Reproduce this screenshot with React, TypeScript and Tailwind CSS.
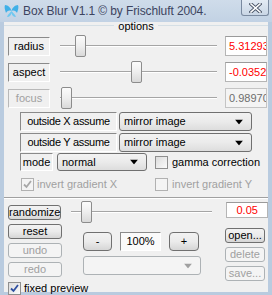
import React from "react";

const sunken =
  "border-t border-l border-t-[#8a8a8a] border-l-[#8a8a8a] border-r border-b border-r-white border-b-white";

function Thumb({ cls }: { cls: string }) {
  return (
    <div
      className={
        "absolute top-0 h-[22px] w-[11px] rounded-[2px] border border-[#8c8c8c] bg-gradient-to-b from-[#fbfbfb] via-[#eeeeee] to-[#d9d9d9] " +
        cls
      }
    />
  );
}

function Track({ cls, children }: { cls: string; children: React.ReactNode }) {
  return (
    <div className={"relative h-[22px] shrink-0 " + cls}>
      <div className="absolute left-0 right-0 top-[10px] h-[2px] border-t border-t-[#a5a5a5] border-b border-b-white" />
      {children}
    </div>
  );
}

function Select({ cls, text, disabled }: { cls: string; text: string; disabled?: boolean }) {
  return (
    <div
      className={
        "relative flex items-center rounded-[3px] border pl-[4px] " +
        (disabled
          ? "border-[#adb2b5] bg-[#f4f4f4] "
          : "border-[#707070] bg-gradient-to-b from-[#f2f2f2] via-[#ebebeb] to-[#dddddd] ") +
        cls
      }
    >
      <span className="text-[11px] leading-none">{text}</span>
      <svg className="absolute right-[8px] top-1/2 -translate-y-1/2" width="8" height="5" viewBox="0 0 8 5">
        <path d="M0 0H8L4 5Z" fill={disabled ? "#a0a0a0" : "#000"} />
      </svg>
    </div>
  );
}

function Btn({ cls, text, disabled }: { cls: string; text: string; disabled?: boolean }) {
  return (
    <div
      className={
        "flex items-center justify-center rounded-[3px] border text-[11px] leading-none " +
        (disabled
          ? "border-[#adb2b5] bg-[#f4f4f4] text-[#a0a0a0] "
          : "border-[#707070] bg-gradient-to-b from-[#f2f2f2] via-[#ebebeb] to-[#d6d6d6] text-black ") +
        cls
      }
    >
      {text}
    </div>
  );
}

function Check({ checked, disabled }: { checked?: boolean; disabled?: boolean }) {
  return (
    <div
      className={
        "relative flex h-[13px] w-[13px] shrink-0 items-center justify-center border " +
        (disabled ? "border-[#b1b1b1] bg-[#f4f4f4]" : "border-[#8f8f8f] bg-gradient-to-br from-[#dcdcdc] to-[#fbfbfb]")
      }
    >
      {checked && (
        <svg width="9" height="9" viewBox="0 0 9 9">
          <path
            d="M1 4.5L3.5 7L8 1"
            fill="none"
            stroke={disabled ? "#a8a8a8" : "#2f4fa0"}
            strokeWidth="1.8"
          />
        </svg>
      )}
    </div>
  );
}

const valueBox =
  "ml-[8px] flex h-[20px] w-[42px] items-center overflow-hidden whitespace-nowrap border pl-[3px] text-[11px] ";

export default function App() {
  return (
    <div className="h-[295px] w-[272px] overflow-hidden bg-[#b9cbdf] font-['Liberation_Sans',Arial,sans-serif] text-black">
      {/* title bar */}
      <div className="relative flex h-[22px] items-center bg-gradient-to-b from-[#cfdcea] to-[#c2d2e4] pl-[4px]">
        <svg width="15" height="14" viewBox="0 0 15 14" className="mb-[1px]">
          <path d="M1 1C4 1 7 4 7.5 7C5 6 3 7 2 9C1 6 0 3 1 1Z" fill="#3fb0e8" />
          <path d="M14 1C11 1 8 4 7.5 7C10 6 12 7 13 9C14 6 15 3 14 1Z" fill="#3fb0e8" />
          <path d="M7.5 7C6 9 4 10 3 13C6 13 7 11 7.5 9C8 11 9 13 12 13C11 10 9 9 7.5 7Z" fill="#6fc8f0" />
        </svg>
        <span className="ml-[4px] mb-[1px] text-[12px] leading-none tracking-[-0.1px] text-[#3d4460]">
          Box Blur V1.1 © by Frischluft 2004.
        </span>
        <div className="absolute right-[3px] top-0 flex h-[16px] w-[28px] items-center justify-center rounded-b-[3px] border border-t-0 border-[#7a8aa0] bg-gradient-to-b from-[#e3ebf4] to-[#c9d6e5]">
          <svg width="13" height="10" viewBox="0 0 13 10">
            <path d="M2 1L11 9M11 1L2 9" stroke="#4a5568" strokeWidth="3.4" strokeLinecap="square" />
            <path d="M2 1L11 9M11 1L2 9" stroke="#ffffff" strokeWidth="1.6" strokeLinecap="square" />
          </svg>
        </div>
      </div>

      {/* client area */}
      <div className="mx-[4px] h-[270px] bg-[#f0f0f0]">
        {/* options group header */}
        <div className="flex h-[8px] items-start">
          <div className="mt-[3px] h-px flex-1 bg-[#d5dfe5]" />
          <span className="-mt-[1px] px-[4px] text-[11px] leading-[11px]">options</span>
          <div className="mt-[3px] h-px flex-1 bg-[#d5dfe5]" />
        </div>

        {/* radius */}
        <div className="mt-[5px] flex h-[22px] items-center pl-[4px]">
          <div className={"flex h-[19px] w-[42px] items-center justify-center text-[11px] " + sunken}>radius</div>
          <Track cls="ml-[10px] w-[157px]">
            <Thumb cls="left-[15px]" />
          </Track>
          <div className={valueBox + "border-[#b5b5b5] border-t-[#9a9a9a] bg-white text-[#ff0000]"}>5.31293</div>
        </div>

        {/* aspect */}
        <div className="mt-[4px] flex h-[22px] items-center pl-[4px]">
          <div className={"flex h-[19px] w-[42px] items-center justify-center text-[11px] " + sunken}>aspect</div>
          <Track cls="ml-[10px] w-[157px]">
            <Thumb cls="left-[71px]" />
          </Track>
          <div className={valueBox + "border-[#b5b5b5] border-t-[#9a9a9a] bg-white text-[#ff0000]"}>-0.0352</div>
        </div>

        {/* focus (disabled) */}
        <div className="mt-[4px] flex h-[22px] items-center pl-[4px]">
          <div className="flex h-[19px] w-[42px] items-center justify-center border-t border-l border-[#b8b8b8] border-r border-b border-r-white border-b-white text-[11px] text-[#a0a0a0]">
            focus
          </div>
          <Track cls="ml-[10px] w-[157px]">
            <Thumb cls="left-[1px]" />
          </Track>
          <div className={valueBox + "border-[#c4c4c4] bg-[#f4f4f4] text-[#6d6d6d]"}>0.98970</div>
        </div>

        {/* outside X */}
        <div className="mt-[3px] flex h-[19px] items-stretch pl-[16px]">
          <div className={"flex w-[97px] items-center justify-center text-[11px] tracking-[-0.3px] " + sunken}>
            outside X assume
          </div>
          <Select cls="ml-[2px] w-[133px]" text="mirror image" />
        </div>
        {/* outside Y */}
        <div className="mt-[2px] flex h-[19px] items-stretch pl-[16px]">
          <div className={"flex w-[97px] items-center justify-center text-[11px] tracking-[-0.3px] " + sunken}>
            outside Y assume
          </div>
          <Select cls="ml-[2px] w-[133px]" text="mirror image" />
        </div>
        {/* mode */}
        <div className="mt-[1px] flex h-[18px] items-stretch pl-[16px]">
          <div className={"flex w-[33px] items-center justify-center text-[11px] " + sunken}>mode</div>
          <Select cls="ml-[4px] w-[90px]" text="normal" />
          <div className="ml-[8px] flex items-center">
            <Check />
            <span className="ml-[4px] text-[11px]">gamma correction</span>
          </div>
        </div>
        {/* invert row */}
        <div className="mt-[7px] flex h-[13px] items-center">
          <div className="ml-[17px] flex items-center">
            <Check checked disabled />
            <span className="ml-[3px] text-[11px] text-[#a0a0a0]">invert gradient X</span>
          </div>
          <div className="ml-[38px] flex items-center">
            <Check disabled />
            <span className="ml-[4px] text-[11px] text-[#a0a0a0]">invert gradient Y</span>
          </div>
        </div>

        {/* separator */}
        <div className="mt-[6px] h-[2px] border-t border-t-[#a0a0a0] border-b border-b-white" />

        {/* randomize row */}
        <div className="mt-[2px] flex h-[22px] items-center pl-[4px]">
          <Btn cls="h-[15px] w-[54px]" text="randomize" />
          <Track cls="ml-[10px] w-[141px]">
            <Thumb cls="left-[10px]" />
          </Track>
          <div className="mb-[4px] ml-[14px] flex h-[16px] w-[42px] items-center justify-center border border-[#b5b5b5] border-t-[#9a9a9a] bg-white text-[11px] text-[#ff0000]">
            0.05
          </div>
        </div>

        {/* lower block */}
        <div className="flex">
          <div className="ml-[4px] mt-[1px] flex w-[54px] flex-col">
            <Btn cls="h-[15px]" text="reset" />
            <Btn cls="mt-[4px] h-[15px]" text="undo" disabled />
            <Btn cls="mt-[4px] h-[15px]" text="redo" disabled />
            <div className="mt-[3px] flex items-center whitespace-nowrap">
              <Check checked />
              <span className="ml-[3px] text-[11px]">fixed preview</span>
            </div>
          </div>

          <div className="ml-[21px] mt-[9px] flex w-[118px] flex-col">
            <div className="flex h-[19px] items-stretch">
              <Btn cls="w-[29px] rounded-[4px]" text="-" />
              <div className={"ml-[8px] flex w-[41px] items-center justify-center bg-[#fafafa] text-[11px] " + sunken}>
                100%
              </div>
              <Btn cls="ml-[8px] w-[30px] rounded-[4px]" text="+" />
            </div>
            <Select cls="mt-[5px] h-[19px] w-[118px]" text="" disabled />
          </div>

          <div className="ml-[24px] mt-[5px] flex w-[40px] flex-col">
            <Btn cls="h-[15px]" text="open..." />
            <Btn cls="mt-[4px] h-[15px]" text="delete" disabled />
            <Btn cls="mt-[4px] h-[15px]" text="save..." disabled />
          </div>
        </div>
      </div>
    </div>
  );
}
